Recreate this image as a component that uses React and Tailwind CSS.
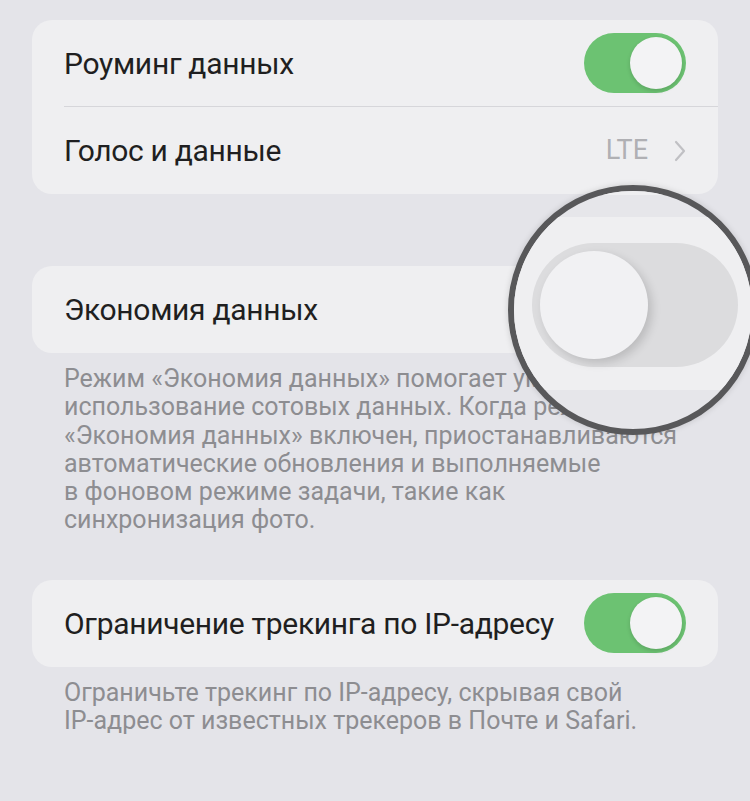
import React from 'react';

const font = { fontFamily: 'Roboto, "Noto Sans", sans-serif' };

const Toggle = ({ on }) => (
  <div className={`w-[102px] h-[60px] rounded-full p-[4px] flex ${on ? 'bg-[#6cc272] justify-end' : 'bg-[#dedee0] justify-start'}`}>
    <div className="w-[52px] h-[52px] rounded-full bg-[#f3f3f5] shadow-[0_2px_4px_rgba(0,0,0,0.15)]" />
  </div>
);

const Row = ({ label, children, border }) => (
  <div className={`h-[87px] flex items-center justify-between pr-[32px] ${border ? 'border-b border-[#d6d6da]' : ''}`}>
    <span className="text-[30px] text-[#1f1f21] tracking-[-0.3px]">{label}</span>
    {children}
  </div>
);

const Note = ({ children }) => (
  <p className="px-[32px] pt-[12px] text-[25px] leading-[28.3px] text-[#8d8d91] tracking-[0px]">{children}</p>
);

export default function App() {
  return (
    <div className="relative w-[750px] h-[801px] overflow-hidden bg-[#e4e4e9]" style={font}>
      <div className="pt-[20px] px-[32px] flex flex-col">
        <div className="bg-[#efeff1] rounded-[20px] pl-[32px]">
          <Row label="Роуминг данных" border>
            <Toggle on />
          </Row>
          <Row label="Голос и данные">
            <div className="flex items-center gap-[26px] text-[27px] text-[#b0b0b4]">
              <span>LTE</span>
              <svg width="12" height="22" viewBox="0 0 12 22" fill="none">
                <path d="M2 2l8 9-8 9" stroke="#c0c0c4" strokeWidth="2.2" strokeLinecap="round" strokeLinejoin="round" />
              </svg>
            </div>
          </Row>
        </div>

        <div className="mt-[72px] bg-[#efeff1] rounded-[20px] pl-[32px]">
          <Row label="Экономия данных">
            <Toggle />
          </Row>
        </div>
        <Note>
          Режим «Экономия данных» помогает уменьшить<br />
          использование сотовых данных. Когда режим<br />
          «Экономия данных» включен, приостанавливаются<br />
          автоматические обновления и выполняемые<br />
          в фоновом режиме задачи, такие как<br />
          синхронизация фото.
        </Note>

        <div className="mt-[45px] bg-[#efeff1] rounded-[20px] pl-[32px]">
          <Row label="Ограничение трекинга по IP-адресу">
            <Toggle on />
          </Row>
        </div>
        <Note>
          Ограничьте трекинг по IP-адресу, скрывая свой<br />
          IP-адрес от известных трекеров в Почте и Safari.
        </Note>
      </div>

      {/* magnifier */}
      <div className="absolute left-[508px] top-[185px] w-[250px] h-[250px] rounded-full border-[6px] border-[#58585a] overflow-hidden bg-[#e6e6ea] shadow-[0_0_6px_rgba(0,0,0,0.15)]">
        <div className="absolute left-0 right-0 top-[-10px] h-[14px] bg-[#efeff1]" />
        <div className="absolute left-0 right-0 top-[26px] h-[173px] bg-[#efeff1]" />
        <div className="absolute left-[18px] top-[52px] w-[206px] h-[124px] rounded-full bg-[#dcdcde] flex items-center pl-[8px]">
          <div className="w-[108px] h-[108px] rounded-full bg-[#f1f1f3] shadow-[4px_4px_10px_rgba(0,0,0,0.15)]" />
        </div>
      </div>
    </div>
  );
}
